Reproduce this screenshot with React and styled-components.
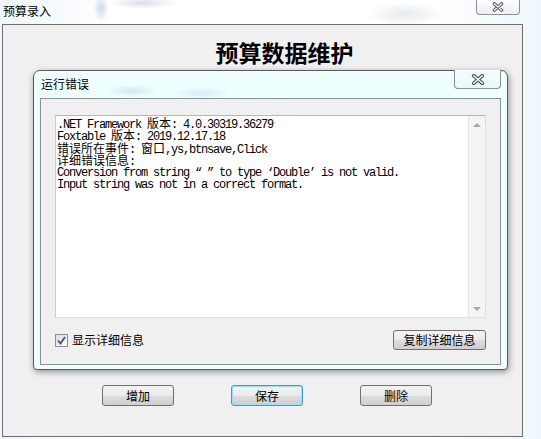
import React from "react";
import styled, { createGlobalStyle, css } from "styled-components";

const CJK = `"Noto Sans CJK SC", "Noto Sans", sans-serif`;
const MONO = `"Liberation Mono", "Noto Sans CJK SC", monospace`;

const Global = createGlobalStyle`
  html, body { margin: 0; padding: 0; }
  body { width: 541px; height: 439px; overflow: hidden; font-family: ${CJK}; }
`;

const Screen = styled.div`
  width: 541px;
  height: 439px;
  overflow: hidden;
  display: flex;
  flex-direction: column;
  background:
    radial-gradient(ellipse 8px 14px at 101px 8px, rgba(120, 150, 200, 0.35), transparent),
    radial-gradient(ellipse 34px 6px at 143px 3px, rgba(150, 160, 190, 0.35), transparent),
    radial-gradient(ellipse 40px 12px at 405px 14px, rgba(200, 210, 220, 0.45), transparent),
    linear-gradient(90deg, #eef7fc 0%, #ffffff 20%, #ffffff 80%, #eef7fc 100%);
`;

const TitleBar = styled.div`
  height: 24px;
  flex: none;
  display: flex;
  justify-content: space-between;
  align-items: flex-start;
  padding: 0 21px 0 3px;
`;

const WinTitle = styled.span`
  font: 12px/16px ${CJK};
  color: #000;
  margin-top: 3px;
`;

const CloseBox = styled.div`
  box-sizing: border-box;
  width: ${(p) => p.$w}px;
  height: ${(p) => p.$h}px;
  border: 1px solid #8c9094;
  border-top: none;
  border-radius: 0 0 4px 4px;
  background: linear-gradient(#fbfdfe, #edf1f3);
  display: flex;
  align-items: center;
  justify-content: center;
  flex: none;
`;

const MainRow = styled.div`
  flex: 1;
  display: flex;
  padding-left: 2px;
`;

const Body = styled.div`
  width: 521px;
  height: 413px;
  box-sizing: border-box;
  border: 1px solid #6f6f6f;
  background: #f0f0f0;
  display: flex;
  flex-direction: column;
`;

const Heading = styled.h1`
  margin: 15px 0 0;
  padding-left: 44px;
  text-align: center;
  font: bold 23px/24px ${CJK};
  color: #000;
`;

const Dialog = styled.div`
  margin: 6px 0 0 30px;
  width: 475px;
  height: 300px;
  box-sizing: border-box;
  border: 1px solid #5a5a5a;
  border-radius: 7px 7px 4px 4px;
  background:
    radial-gradient(ellipse 26px 6px at 98px 20px, rgba(150, 170, 200, 0.3), transparent),
    radial-gradient(ellipse 30px 6px at 168px 22px, rgba(150, 180, 220, 0.25), transparent),
    #effefe;
  box-shadow: 1px 2px 6px rgba(0, 0, 0, 0.4);
  display: flex;
  flex-direction: column;
  padding: 0 6px 4px 6px;
`;

const DialogTitleBar = styled.div`
  height: 27px;
  flex: none;
  display: flex;
  justify-content: space-between;
  align-items: flex-start;
`;

const DialogTitle = styled.span`
  font: 12px/16px ${CJK};
  color: #000;
  margin: 5px 0 0 1px;
`;

const DialogClose = styled(CloseBox)`
  margin-top: -1px;
  background: linear-gradient(#f3fefe, #eaf7f8);
`;

const Client = styled.div`
  flex: 1;
  border: 1px solid #8e8f90;
  background: #f0f0f0;
  display: flex;
  flex-direction: column;
  padding: 16px 14px 14px 14px;
`;

const TextBox = styled.div`
  height: 203px;
  box-sizing: border-box;
  border: 1px solid #dcdfe3;
  border-top-color: #b4b7bc;
  border-left-color: #c9ccd0;
  background: #ffffff;
  display: flex;
`;

const TextArea = styled.div`
  flex: 1;
  padding: 1px 0 0 1px;
  font-family: ${MONO};
  font-size: 12px;
  letter-spacing: -1.2px;
  color: #000;
  white-space: pre;
`;

const Line = styled.div`
  height: 12.4px;
  line-height: 12.4px;
`;

const Han = styled.span`
  font-family: ${CJK};
  letter-spacing: 0;
  font-size: 12px;
  line-height: 12.4px;
`;

const ScrollBar = styled.div`
  width: 17px;
  flex: none;
  background: #f4f4f4;
  border-left: 1px solid #e6e6e6;
  display: flex;
  flex-direction: column;
  justify-content: space-between;
  align-items: center;
  padding: 7px 0 6px;
  box-sizing: border-box;
`;

const Arrow = styled.div`
  width: 0;
  height: 0;
  border-left: 4px solid transparent;
  border-right: 4px solid transparent;
  ${(p) =>
    p.$down
      ? css`border-top: 4px solid #a6a6a6;`
      : css`border-bottom: 4px solid #a6a6a6;`}
`;

const BottomRow = styled.div`
  margin-top: 12px;
  display: flex;
  justify-content: space-between;
  align-items: center;
`;

const CheckLabel = styled.label`
  display: flex;
  align-items: center;
  gap: 4px;
  font: 12px/16px ${CJK};
  color: #000;
`;

const CheckBox = styled.span`
  width: 13px;
  height: 13px;
  box-sizing: border-box;
  border: 1px solid #8e8f8f;
  background: linear-gradient(135deg, #dcdcdc, #fbfbfb);
  display: flex;
  align-items: center;
  justify-content: center;
`;

const Button = styled.button`
  width: ${(p) => p.$w || 72}px;
  height: ${(p) => p.$h || 21}px;
  box-sizing: border-box;
  padding: 0;
  border: 1px solid #707070;
  border-radius: 3px;
  background: linear-gradient(#f2f2f2 0%, #ebebeb 50%, #dddddd 50%, #cfcfcf 100%);
  font: 12px/1 ${CJK};
  color: #000;
  ${(p) =>
    p.$focused &&
    css`
      border-color: #3c9be0;
      box-shadow: inset 0 0 0 1px #9edcf8;
    `}
`;

const ButtonRow = styled.div`
  margin-top: 15px;
  padding-left: 99px;
  display: flex;
  gap: 57px;
`;

const XIcon = ({ w = 13, h = 10 }) => (
  <svg width={w} height={h} viewBox="0 0 13 10">
    <path d="M2.5 1.5 L10.5 8.5 M10.5 1.5 L2.5 8.5" stroke="#50545a" strokeWidth="3.4" strokeLinecap="round" fill="none" />
    <path d="M2.5 1.5 L10.5 8.5 M10.5 1.5 L2.5 8.5" stroke="#f7f7f7" strokeWidth="1.4" strokeLinecap="round" fill="none" />
  </svg>
);

export default function App() {
  return (
    <>
      <Global />
      <Screen>
        <TitleBar>
          <WinTitle>预算录入</WinTitle>
          <CloseBox $w={44} $h={15}>
            <XIcon w={12} h={10} />
          </CloseBox>
        </TitleBar>
        <MainRow>
          <Body>
            <Heading>预算数据维护</Heading>
            <Dialog>
              <DialogTitleBar>
                <DialogTitle>运行错误</DialogTitle>
                <DialogClose $w={47} $h={19}>
                  <XIcon w={14} h={11} />
                </DialogClose>
              </DialogTitleBar>
              <Client>
                <TextBox>
                  <TextArea>
                    <Line>
                      .NET Framework <Han>版本</Han>: 4.0.30319.36279
                    </Line>
                    <Line>
                      Foxtable <Han>版本</Han>: 2019.12.17.18
                    </Line>
                    <Line>
                      <Han>错误所在事件</Han>: <Han>窗口</Han>,ys,btnsave,Click
                    </Line>
                    <Line>
                      <Han>详细错误信息</Han>:
                    </Line>
                    <Line>Conversion from string “ ” to type ‘Double’ is not valid.</Line>
                    <Line>Input string was not in a correct format.</Line>
                  </TextArea>
                  <ScrollBar>
                    <Arrow />
                    <Arrow $down />
                  </ScrollBar>
                </TextBox>
                <BottomRow>
                  <CheckLabel>
                    <CheckBox>
                      <svg width="9" height="9" viewBox="0 0 9 9">
                        <path d="M1 4.5 L3.5 7.5 L8 1" stroke="#3e4f93" strokeWidth="1.8" fill="none" />
                      </svg>
                    </CheckBox>
                    显示详细信息
                  </CheckLabel>
                  <Button $w={93} $h={20}>复制详细信息</Button>
                </BottomRow>
              </Client>
            </Dialog>
            <ButtonRow>
              <Button>增加</Button>
              <Button $focused>保存</Button>
              <Button>删除</Button>
            </ButtonRow>
          </Body>
        </MainRow>
      </Screen>
    </>
  );
}
